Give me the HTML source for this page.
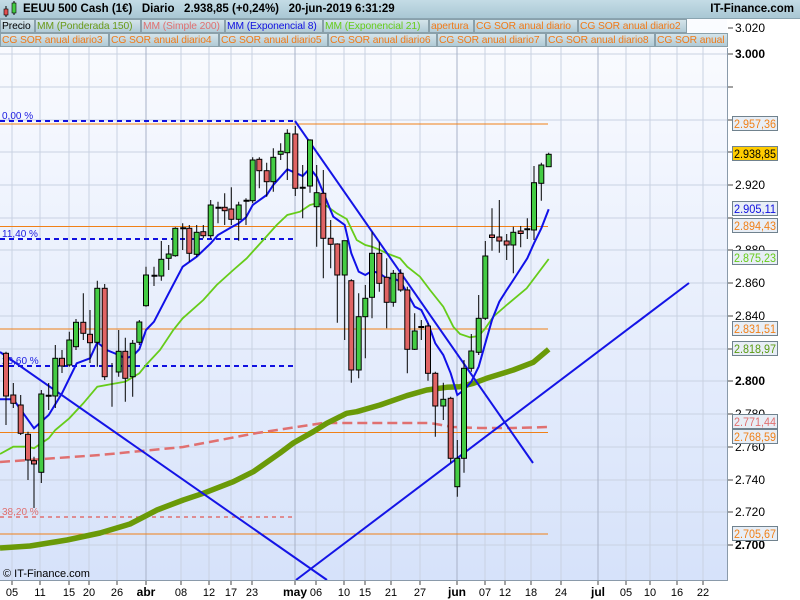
<!DOCTYPE html>
<html><head><meta charset="utf-8"><style>
*{margin:0;padding:0}
body{width:800px;height:600px;overflow:hidden;background:#fff;font-family:"Liberation Sans",sans-serif;position:relative}
.tb{position:absolute;left:0;top:0;width:800px;height:18px;background:linear-gradient(#c4dce6,#a9c7d4);border-bottom:1px solid #8aa4b0}
.tt{position:absolute;top:3px;font-size:11.5px;font-weight:bold;color:#000;white-space:pre}
.lg{position:absolute;height:14px;font-size:10.3px;line-height:13px;padding:0 1px;background:linear-gradient(#d4e4ea,#b0cad6);border:1px solid #8aa0aa;white-space:nowrap;overflow:hidden;box-sizing:border-box;letter-spacing:-0.1px}
.o{color:#f07a18}
</style></head><body>
<svg width="800" height="600" style="position:absolute;left:0;top:0">
<defs><linearGradient id="bg" x1="0" y1="0" x2="0" y2="1"><stop offset="0" stop-color="#fbfcff"/><stop offset="1" stop-color="#d6e2fa"/></linearGradient></defs>
<rect x="0" y="18" width="727" height="562" fill="url(#bg)"/>
<g stroke="#c9d2e2" stroke-width="1">
<line x1="0" y1="54" x2="727" y2="54"/><line x1="0" y1="87" x2="727" y2="87"/><line x1="0" y1="120" x2="727" y2="120"/><line x1="0" y1="152" x2="727" y2="152"/><line x1="0" y1="185" x2="727" y2="185"/><line x1="0" y1="218" x2="727" y2="218"/><line x1="0" y1="250" x2="727" y2="250"/><line x1="0" y1="283" x2="727" y2="283"/><line x1="0" y1="316" x2="727" y2="316"/><line x1="0" y1="349" x2="727" y2="349"/><line x1="0" y1="381" x2="727" y2="381"/><line x1="0" y1="414" x2="727" y2="414"/><line x1="0" y1="447" x2="727" y2="447"/><line x1="0" y1="480" x2="727" y2="480"/><line x1="0" y1="512" x2="727" y2="512"/><line x1="0" y1="545" x2="727" y2="545"/>
<line x1="12" y1="33" x2="12" y2="580"/><line x1="40" y1="33" x2="40" y2="580"/><line x1="69" y1="33" x2="69" y2="580"/><line x1="89" y1="33" x2="89" y2="580"/><line x1="117" y1="33" x2="117" y2="580"/><line x1="181" y1="33" x2="181" y2="580"/><line x1="209" y1="33" x2="209" y2="580"/><line x1="231" y1="33" x2="231" y2="580"/><line x1="252" y1="33" x2="252" y2="580"/><line x1="316" y1="33" x2="316" y2="580"/><line x1="344" y1="33" x2="344" y2="580"/><line x1="365" y1="33" x2="365" y2="580"/><line x1="391" y1="33" x2="391" y2="580"/><line x1="420" y1="33" x2="420" y2="580"/><line x1="485" y1="33" x2="485" y2="580"/><line x1="505" y1="33" x2="505" y2="580"/><line x1="531" y1="33" x2="531" y2="580"/><line x1="561" y1="33" x2="561" y2="580"/><line x1="626" y1="33" x2="626" y2="580"/><line x1="650" y1="33" x2="650" y2="580"/><line x1="677" y1="33" x2="677" y2="580"/><line x1="703" y1="33" x2="703" y2="580"/>
</g>
<g stroke="#a8b2c8" stroke-width="1"><line x1="146" y1="33" x2="146" y2="580"/><line x1="295" y1="33" x2="295" y2="580"/><line x1="457" y1="33" x2="457" y2="580"/><line x1="598" y1="33" x2="598" y2="580"/></g>
<g stroke="#f08018" stroke-width="1"><line x1="0" y1="124" x2="548" y2="124"/><line x1="0" y1="226.5" x2="548" y2="226.5"/><line x1="0" y1="329" x2="548" y2="329"/><line x1="0" y1="432.5" x2="548" y2="432.5"/><line x1="0" y1="534" x2="548" y2="534"/></g>
<g stroke="#1010e0" stroke-width="2" stroke-dasharray="5,4"><line x1="0" y1="121" x2="295" y2="121"/><line x1="0" y1="239" x2="295" y2="239"/><line x1="0" y1="366" x2="295" y2="366"/></g>
<line x1="0" y1="517" x2="295" y2="517" stroke="#e07070" stroke-width="1.5" stroke-dasharray="4,4"/>
<g font-size="10" fill="#1a1ae0"><text x="2" y="119">0,00 %</text><text x="2" y="237">11,40 %</text><text x="2" y="364">23,60 %</text></g>
<text x="2" y="515" font-size="10" fill="#e07070">38,20 %</text>
<polyline fill="none" stroke="#e07070" stroke-width="2.5" stroke-dasharray="10,5" points="0,462 100,455 183,447 257,433 323,423 380,423 430,423 453,427 480,428 513,428 549,427"/>
<polyline fill="none" stroke="#6a9a08" stroke-width="5.5" stroke-linejoin="round" points="0,548 30,546 67,540 100,533 130,524 157,510 183.3,500 203.3,493.3 233.3,481.7 253.3,471.7 280,453 293.3,443 313.3,431.7 326.7,423.3 346.7,413.3 356.7,411.7 380,405 406.7,395.7 426.7,390 446.7,387.3 460,386.7 473.3,383.3 486.7,378.3 513.3,370 533.3,362.3 548.7,349.3"/>
<polyline fill="none" stroke="#66cc1a" stroke-width="1.8" points="0,454 13.3,446.7 28,446.7 34,448.3 41.3,443.3 48.7,438.3 55.3,430 69.3,418.3 83.3,403.3 97.3,386.7 112,384 125.3,381.7 139.3,373.3 146,365 160,350 173.3,330 182.7,318.3 203.3,300 216.7,285 233.3,270 246.7,258.3 263.3,240 276.7,225 287.3,215 300,211.7 310,205 316.7,203.3 326.7,206 336.7,213.3 346.7,219 356.7,240 365.3,245 372,246.7 380,250 386.7,253.3 400,258.3 407.3,266.7 420,276.7 430,290 443.3,306.7 453.3,326.7 460,334 470,337.3 478.7,336 485.3,328.3 493.3,316.7 506.7,305 526.7,288.3 548.7,259"/>
<polyline fill="none" stroke="#1010e8" stroke-width="2" points="0,399.3 13.3,399.3 34,428.3 48.7,415 62,393.3 76.7,363.3 90,358.3 97.3,342.3 106.7,350 118.7,355 125.3,358.3 132.7,356 139.3,349.3 146,330 154,321.7 168.7,293.3 182.7,266.7 196.7,256.7 210.7,243.3 218,235 231.3,227.3 238.7,223.3 246,217.3 252.7,205 266.7,195 273.3,185 287.3,169.3 302.7,176 310,168.3 316.7,176.7 323.3,192.7 333.3,216.7 344.7,225 351.3,253.3 358.7,271.7 365.3,275 372,271 379.3,273.3 386.7,278.3 393.3,278.3 400.7,281.7 407.3,293.3 414.7,306.7 421.3,310 428,323.3 435.3,343.3 443.3,355 450.7,373.3 457.3,395 464,390 471.3,381.7 478.7,366.7 485.3,343.3 492,320 499.3,301.7 506.7,290 513.3,280 527.3,258.3 534,243.3 541.3,228.3 548.7,209.3"/>
<g stroke="#1414e6" stroke-width="2"><line x1="295" y1="121" x2="533" y2="463"/><line x1="0" y1="352" x2="327" y2="580"/><line x1="296" y1="580" x2="689" y2="283"/></g>
<g stroke="#000" stroke-width="1">
<path d="M6,351.7V425M13.3,383V408M20.7,395V435M28,431.7V480M34,456.7V508M41.3,390V483M48.7,383V410M55.3,345V408M62,350V373M69.3,331.7V366.7M76,319V350M83.3,293.3V340M90,310V363M97.3,280.7V366.7M104.7,284V380M112,363V406.7M118.7,330V376.7M125.3,337.7V401.7M132.7,340V396.7M139.3,320V345M146,266.7V306.7M154,266.7V286M161.3,241V280.7M168.7,245V270M175.3,227.3V256.7M182.7,223.3V250M189.3,225V261.7M196.7,225V256.7M203.3,225V238.3M210.7,200V238.3M218,201.7V223.3M224.7,193.3V225M231.3,187.3V225M238.7,201.7V240.7M246,198.3V225M252.7,157.3V203.3M259.3,157.3V188.3M266.7,162.7V196.7M273.3,148.3V191.7M280.7,143.3V160M287.3,129.3V180M295.3,126V196M302.7,165V218.3M310,139.3V192.7M316.7,165V246.7M323.3,170V278.3M330.7,220V268.3M337.3,243.3V322.7M344.7,240.7V340M351.3,279.3V382.7M358.7,293.3V378.3M365.3,285V358.3M372,231.7V318.3M379.3,241.7V291.7M386.7,258.3V328.3M393.3,270V306.7M400.7,269.3V291.7M407.3,286.7V373.3M414.7,313.3V350M421.3,320V340M428,323.3V380.7M435.3,371.7V436.7M443.3,382.7V420M450.7,396.7V462.7M457.3,440V496.7M464,360V472.7M471.3,334V371.7M478.7,295V355M485.3,241V320M492,208.3V250.7M499.3,200V252.7M506.7,234V260M513.3,226.7V273.3M520.7,226V247.3M527.3,218.3V239M534,166V240M541.3,162.7V200.7M548.7,152.7V166.7"/>
<path d="M45.7,395.7h6M151.5,275.7h6M180.2,228.3h6M215.5,207.7h6M243.5,200.7h6M299.7,187.7h6M418.3,327h6M524.3,229.3h6" stroke-width="2"/>
</g>
<g stroke="#000" stroke-width="1" fill="#e06464">
<rect x="3.5" y="353.3" width="5" height="42.7"/><rect x="10.8" y="395" width="5" height="8.3"/><rect x="18.2" y="405" width="5" height="28.3"/><rect x="25.5" y="434.3" width="5" height="25.7"/><rect x="31.5" y="460.7" width="5" height="3.3"/><rect x="59.5" y="358.3" width="5" height="7.7"/><rect x="80.8" y="322.3" width="5" height="11"/><rect x="87.5" y="334.3" width="5" height="8.4"/><rect x="102.2" y="288.3" width="5" height="88.4"/><rect x="122.8" y="351.3" width="5" height="27"/><rect x="186.8" y="228.3" width="5" height="25"/><rect x="200.8" y="231.7" width="5" height="4"/><rect x="222.2" y="207.3" width="5" height="3.4"/><rect x="228.8" y="209" width="5" height="10.3"/><rect x="256.8" y="159.3" width="5" height="11.4"/><rect x="264.2" y="170.7" width="5" height="11"/><rect x="292.8" y="134" width="5" height="54.3"/><rect x="320.8" y="193.3" width="5" height="45"/><rect x="328.2" y="238.3" width="5" height="6"/><rect x="334.8" y="244" width="5" height="31"/><rect x="348.8" y="280.7" width="5" height="89.3"/><rect x="376.8" y="253.3" width="5" height="30"/><rect x="384.2" y="277.3" width="5" height="25"/><rect x="398.2" y="273.3" width="5" height="16.7"/><rect x="404.8" y="290" width="5" height="59.3"/><rect x="425.5" y="326" width="5" height="47.3"/><rect x="432.8" y="373.3" width="5" height="32.7"/><rect x="448.2" y="398.3" width="5" height="60"/><rect x="489.5" y="235" width="5" height="2.5"/><rect x="496.8" y="237" width="5" height="4"/><rect x="504.2" y="241" width="5" height="4"/><rect x="518.2" y="231" width="5" height="2.5"/>
</g>
<g stroke="#000" stroke-width="1" fill="#44cc44">
<rect x="38.8" y="394" width="5" height="78.3"/><rect x="52.8" y="358.3" width="5" height="37.7"/><rect x="66.8" y="340" width="5" height="25"/><rect x="73.5" y="322.3" width="5" height="24.4"/><rect x="94.8" y="288.3" width="5" height="54"/><rect x="116.2" y="351.3" width="5" height="20.7"/><rect x="130.2" y="343.3" width="5" height="33.4"/><rect x="136.8" y="322" width="5" height="20.3"/><rect x="143.5" y="275" width="5" height="30.7"/><rect x="158.8" y="259.3" width="5" height="16.7"/><rect x="166.2" y="254" width="5" height="4.3"/><rect x="172.8" y="228.3" width="5" height="27.4"/><rect x="194.2" y="232.3" width="5" height="22"/><rect x="208.2" y="205" width="5" height="30.7"/><rect x="236.2" y="205" width="5" height="14.3"/><rect x="250.2" y="160" width="5" height="40.7"/><rect x="270.8" y="157.3" width="5" height="24.4"/><rect x="278.2" y="151.3" width="5" height="3"/><rect x="284.8" y="133.3" width="5" height="19.4"/><rect x="307.5" y="140" width="5" height="46"/><rect x="314.2" y="192.7" width="5" height="14"/><rect x="342.2" y="240.7" width="5" height="34.3"/><rect x="356.2" y="316.7" width="5" height="53.3"/><rect x="362.8" y="298.3" width="5" height="18.4"/><rect x="369.5" y="253.3" width="5" height="44"/><rect x="390.8" y="273.3" width="5" height="29"/><rect x="412.2" y="331" width="5" height="18.3"/><rect x="440.8" y="399.3" width="5" height="6.7"/><rect x="454.8" y="458.3" width="5" height="28.4"/><rect x="461.5" y="368.3" width="5" height="90"/><rect x="468.8" y="351" width="5" height="17.3"/><rect x="476.2" y="318.3" width="5" height="34"/><rect x="482.8" y="256" width="5" height="62.3"/><rect x="510.8" y="232.3" width="5" height="12.7"/><rect x="531.5" y="182.7" width="5" height="47.3"/><rect x="538.8" y="165" width="5" height="18.3"/><rect x="546.2" y="154.3" width="5" height="12.4"/>
</g>
<line x1="727.5" y1="48" x2="727.5" y2="580" stroke="#8a9aaa"/>
<line x1="0" y1="580.5" x2="728" y2="580.5" stroke="#8a9aaa"/>
<text x="3" y="577" font-size="11" fill="#000">© IT-Finance.com</text>
<g stroke="#444"><path d="M728,28h5M728,54h5M728,87h5M728,120h5M728,152h5M728,185h5M728,218h5M728,250h5M728,283h5M728,316h5M728,349h5M728,381h5M728,414h5M728,447h5M728,480h5M728,512h5M728,545h5"/></g>
<g font-size="12" fill="#000">
<text x="735" y="32">3.020</text><text x="735" y="58" font-weight="bold">3.000</text><text x="735" y="189">2.920</text><text x="735" y="254">2.880</text><text x="735" y="287">2.860</text><text x="735" y="320">2.840</text><text x="735" y="385" font-weight="bold">2.800</text><text x="735" y="418">2.780</text><text x="735" y="451">2.760</text><text x="735" y="484">2.740</text><text x="735" y="516">2.720</text><text x="735" y="549" font-weight="bold">2.700</text>
</g>
<g font-size="12" stroke="#70828e" stroke-width="1">
<rect x="732.5" y="116.5" width="45" height="14" fill="#e8eef6"/><text x="734" y="128" fill="#f08018" stroke="none" textLength="42" lengthAdjust="spacingAndGlyphs">2.957,36</text>
<rect x="732.5" y="146.5" width="45" height="14" fill="#ffcc00"/><text x="734" y="158" fill="#000" stroke="none" textLength="42" lengthAdjust="spacingAndGlyphs">2.938,85</text>
<rect x="732.5" y="201.5" width="45" height="14" fill="#e8eef6"/><text x="734" y="213" fill="#1010e0" stroke="none" textLength="42" lengthAdjust="spacingAndGlyphs">2.905,11</text>
<rect x="732.5" y="218.5" width="45" height="14" fill="#e8eef6"/><text x="734" y="230" fill="#f08018" stroke="none" textLength="42" lengthAdjust="spacingAndGlyphs">2.894,43</text>
<rect x="732.5" y="250.5" width="45" height="14" fill="#e8eef6"/><text x="734" y="262" fill="#66cc1a" stroke="none" textLength="42" lengthAdjust="spacingAndGlyphs">2.875,23</text>
<rect x="732.5" y="321.5" width="45" height="14" fill="#e8eef6"/><text x="734" y="333" fill="#f08018" stroke="none" textLength="42" lengthAdjust="spacingAndGlyphs">2.831,51</text>
<rect x="732.5" y="341.5" width="45" height="14" fill="#e8eef6"/><text x="734" y="353" fill="#5a9a10" stroke="none" textLength="42" lengthAdjust="spacingAndGlyphs">2.818,97</text>
<rect x="732.5" y="414.5" width="45" height="14" fill="#e8eef6"/><text x="734" y="426" fill="#e07070" stroke="none" textLength="42" lengthAdjust="spacingAndGlyphs">2.771,44</text>
<rect x="732.5" y="429.5" width="45" height="14" fill="#e8eef6"/><text x="734" y="441" fill="#f08018" stroke="none" textLength="42" lengthAdjust="spacingAndGlyphs">2.768,59</text>
<rect x="732.5" y="526.5" width="45" height="14" fill="#e8eef6"/><text x="734" y="538" fill="#f08018" stroke="none" textLength="42" lengthAdjust="spacingAndGlyphs">2.705,67</text>
</g>
<g font-size="11" fill="#000" text-anchor="middle">
<text x="12" y="596">05</text><text x="40" y="596">11</text><text x="69" y="596">15</text><text x="89" y="596">20</text><text x="117" y="596">26</text><text x="146" y="596" font-weight="bold" font-size="12">abr</text><text x="181" y="596">08</text><text x="209" y="596">12</text><text x="231" y="596">17</text><text x="252" y="596">23</text><text x="295" y="596" font-weight="bold" font-size="12">may</text><text x="316" y="596">06</text><text x="344" y="596">10</text><text x="365" y="596">15</text><text x="391" y="596">21</text><text x="420" y="596">27</text><text x="457" y="596" font-weight="bold" font-size="12">jun</text><text x="485" y="596">07</text><text x="505" y="596">12</text><text x="531" y="596">18</text><text x="561" y="596">24</text><text x="598" y="596" font-weight="bold" font-size="12">jul</text><text x="626" y="596">05</text><text x="650" y="596">10</text><text x="677" y="596">16</text><text x="703" y="596">22</text>
</g>
<g stroke="#444"><path d="M12,581v4M40,581v4M69,581v4M89,581v4M117,581v4M146,581v4M181,581v4M209,581v4M231,581v4M252,581v4M295,581v4M316,581v4M344,581v4M365,581v4M391,581v4M420,581v4M457,581v4M485,581v4M505,581v4M531,581v4M561,581v4M598,581v4M626,581v4M650,581v4M677,581v4M703,581v4"/></g>
</svg>
<div class="tb"></div>
<svg width="18" height="18" style="position:absolute;left:2px;top:0"><line x1="4" y1="6" x2="4" y2="17" stroke="#000"/><rect x="2" y="9" width="4" height="6" fill="#e05050" stroke="#000" stroke-width=".6"/><line x1="12" y1="1" x2="12" y2="15" stroke="#000"/><rect x="10" y="3" width="4" height="10" fill="#44cc44" stroke="#000" stroke-width=".6"/></svg>
<div class="tt" style="left:23px">EEUU 500 Cash (1€)   Diario   2.938,85 (+0,24%)   20-jun-2019 6:31:29</div>
<div class="tt" style="right:6px">IT-Finance.com</div>
<div class="lg" style="left:0;top:19px;width:35px">Precio</div>
<div class="lg" style="left:35px;top:19px;width:106px;color:#6a9a18">MM (Ponderada 150)</div>
<div class="lg" style="left:141px;top:19px;width:84px;color:#e07070">MM (Simple 200)</div>
<div class="lg" style="left:225px;top:19px;width:98px;color:#1010e0">MM (Exponencial 8)</div>
<div class="lg" style="left:323px;top:19px;width:106px;color:#66cc1a">MM (Exponencial 21)</div>
<div class="lg o" style="left:429px;top:19px;width:45px">apertura</div>
<div class="lg o" style="left:474px;top:19px;width:104px">CG SOR anual diario</div>
<div class="lg o" style="left:578px;top:19px;width:109px">CG SOR anual diario2</div>
<div class="lg o" style="left:0;top:33px;width:109px">CG SOR anual diario3</div>
<div class="lg o" style="left:109px;top:33px;width:110px">CG SOR anual diario4</div>
<div class="lg o" style="left:219px;top:33px;width:109px">CG SOR anual diario5</div>
<div class="lg o" style="left:328px;top:33px;width:109px">CG SOR anual diario6</div>
<div class="lg o" style="left:437px;top:33px;width:109px">CG SOR anual diario7</div>
<div class="lg o" style="left:546px;top:33px;width:109px">CG SOR anual diario8</div>
<div class="lg o" style="left:655px;top:33px;width:73px">CG SOR anual</div>
</body></html>
